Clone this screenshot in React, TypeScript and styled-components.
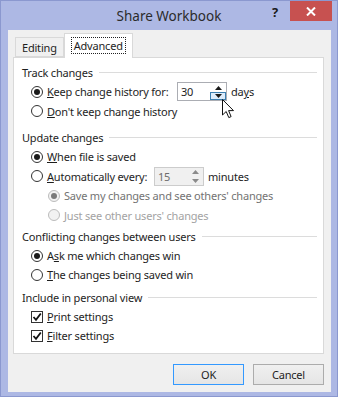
import React from 'react'
import styled, { createGlobalStyle } from 'styled-components'

const GlobalStyle = createGlobalStyle`
  body {
    margin: 0;
    background: #ffffff;
    font-family: 'Noto Sans', 'Open Sans', sans-serif;
  }
`

const Window = styled.div`
  position: relative;
  width: 338px;
  height: 397px;
  box-sizing: border-box;
  background-color: #adb8e4;
  border: 1px solid #8b98cf;
  display: flex;
  flex-direction: column;
  font-size: 11px;
  letter-spacing: -0.2px;
`

const TitleBar = styled.div`
  height: 29px;
  display: grid;
  grid-template-columns: 1fr auto 1fr;
  align-items: start;
`

const Title = styled.div`
  grid-column: 2;
  line-height: 30px;
  font-size: 13.5px;
  letter-spacing: 0;
  color: #2b2b2b;
`

const TitleControls = styled.div`
  grid-column: 3;
  display: flex;
  justify-content: flex-end;
  align-items: center;
  margin-right: 5px;
`

const HelpButton = styled.div`
  width: 26px;
  height: 20px;
  line-height: 22px;
  text-align: center;
  font-size: 13px;
  font-weight: bold;
  color: #1a1a1a;
  margin-right: 2px;
`

const CloseButton = styled.div`
  width: 42px;
  height: 20px;
  background-color: #c75150;
  display: flex;
  align-items: center;
  justify-content: center;
`

const Client = styled.div`
  flex: 1;
  margin: 0 6px 5px 7px;
  background-color: #f0f0f0;
  display: flex;
  flex-direction: column;
  padding: 3px 7px 7px 5px;
`

const TabRow = styled.div`
  display: flex;
  align-items: flex-end;
  padding-left: 2px;
  height: 24px;
  position: relative;
  z-index: 1;
`

const Tab = styled.div<{ active?: boolean }>`
  box-sizing: border-box;
  height: ${({ active }) => (active ? '25px' : '20px')};
  margin-bottom: ${({ active }) => (active ? '-1px' : '0')};
  padding: 0 ${({ active }) => (active ? '7px' : '6px')};
  padding-bottom: ${({ active }) => (active ? '2px' : '0')};
  border: 1px solid #d9d9d9;
  border-bottom: ${({ active }) => (active ? 'none' : '1px solid #d9d9d9')};
  background: ${({ active }) => (active ? '#ffffff' : '#f0f0f0')};
  color: #1e1e1e;
  display: flex;
  align-items: center;
`

const FocusLabel = styled.span`
  outline: 1px dotted #222;
  padding: 0 2px;
  line-height: 15px;
`

const Panel = styled.div`
  height: 297px;
  box-sizing: border-box;
  background: #ffffff;
  border: 1px solid #d9d9d9;
  padding: 4px 6px 0 8px;
`

const Group = styled.div<{ gap?: number }>`
  margin-top: ${({ gap }) => gap ?? 0}px;
`

const GroupHeader = styled.div`
  height: 20px;
  display: flex;
  align-items: center;
  color: #1e1e1e;
  &::after {
    content: '';
    flex: 1;
    height: 1px;
    background: #dcdcdc;
    margin-left: 6px;
  }
`

const Row = styled.div<{ indent?: number; compact?: boolean }>`
  height: ${({ compact }) => (compact ? '18.5px' : '19.5px')};
  display: flex;
  align-items: center;
  padding-left: ${({ indent }) => indent ?? 9}px;
  color: #1e1e1e;
`

const Label = styled.span<{ width?: number; tone?: string }>`
  margin-left: 4px;
  white-space: nowrap;
  width: ${({ width }) => (width ? `${width}px` : 'auto')};
  color: ${({ tone }) => tone ?? '#1e1e1e'};
`

const Radio = styled.span<{ checked?: boolean; disabled?: boolean }>`
  box-sizing: border-box;
  width: 12px;
  height: 12px;
  border-radius: 50%;
  border: 1px solid ${({ disabled }) => (disabled ? '#bcbcbc' : '#333333')};
  background: ${({ disabled }) => (disabled ? '#f2f2f2' : '#ffffff')};
  display: flex;
  align-items: center;
  justify-content: center;
  flex: none;
  &::after {
    content: '';
    width: 6px;
    height: 6px;
    border-radius: 50%;
    background: ${({ disabled }) => (disabled ? '#7a7a7a' : '#1a1a1a')};
    display: ${({ checked }) => (checked ? 'block' : 'none')};
  }
`

const Check = styled.span`
  box-sizing: border-box;
  width: 12px;
  height: 12px;
  border: 1px solid #333333;
  background: #ffffff;
  display: flex;
  align-items: center;
  justify-content: center;
  flex: none;
`

const Spinner = styled.div<{ disabled?: boolean }>`
  box-sizing: border-box;
  width: 50px;
  height: 19px;
  border: 1px solid ${({ disabled }) => (disabled ? '#cccccc' : '#abadb3')};
  background: ${({ disabled }) => (disabled ? '#f0f0f0' : '#ffffff')};
  display: flex;
  color: ${({ disabled }) => (disabled ? '#6d6d6d' : '#1e1e1e')};
`

const SpinValue = styled.div`
  flex: 1;
  padding-left: 3px;
  line-height: 17px;
`

const SpinButtons = styled.div`
  width: 16px;
  display: flex;
  flex-direction: column;
`

const SpinHalf = styled.div<{ hover?: boolean }>`
  flex: 1;
  box-sizing: border-box;
  display: flex;
  align-items: center;
  justify-content: center;
  border: 1px solid ${({ hover }) => (hover ? '#3c7fb1' : 'transparent')};
  background: ${({ hover }) => (hover ? '#dcecfc' : 'transparent')};
`

const Unit = styled.span`
  margin-left: 4px;
`

const Footer = styled.div`
  display: flex;
  justify-content: flex-end;
  gap: 9px;
  margin-top: 10px;
`

const Button = styled.div<{ primary?: boolean }>`
  box-sizing: border-box;
  width: 71px;
  height: 21px;
  border: 1px solid ${({ primary }) => (primary ? '#3399ff' : '#acacac')};
  background: linear-gradient(#f0f0f0, #e5e5e5);
  display: flex;
  align-items: center;
  justify-content: center;
  color: #1e1e1e;
`

const Cursor = styled.svg`
  position: absolute;
  left: 221px;
  top: 98px;
`

const Arrow: React.FC<{ up?: boolean; color?: string }> = ({ up, color = '#1a1a1a' }) => (
  <svg width="7" height="4" viewBox="0 0 7 4">
    <path d={up ? 'M0 4 L3.5 0 L7 4 Z' : 'M0 0 L3.5 4 L7 0 Z'} fill={color} />
  </svg>
)

const Tick = () => (
  <svg width="10" height="10" viewBox="0 0 10 10">
    <path d="M1.5 5 L4 7.8 L8.8 1.5" fill="none" stroke="#111" strokeWidth="1.8" />
  </svg>
)

export default function App() {
  return (
    <>
      <GlobalStyle />
      <Window>
        <TitleBar>
          <Title>Share Workbook</Title>
          <TitleControls>
            <HelpButton>?</HelpButton>
            <CloseButton>
              <svg width="10" height="9" viewBox="0 0 10 9">
                <path d="M1 0.5 L9 8.5 M9 0.5 L1 8.5" stroke="#ffffff" strokeWidth="2" />
              </svg>
            </CloseButton>
          </TitleControls>
        </TitleBar>
        <Client>
          <TabRow>
            <Tab>Editing</Tab>
            <Tab active>
              <FocusLabel>Advanced</FocusLabel>
            </Tab>
          </TabRow>
          <Panel>
            <Group>
              <GroupHeader>Track changes</GroupHeader>
              <Row>
                <Radio checked />
                <Label width={130}>
                  <u>K</u>eep change history for:
                </Label>
                <Spinner>
                  <SpinValue>30</SpinValue>
                  <SpinButtons>
                    <SpinHalf>
                      <Arrow up />
                    </SpinHalf>
                    <SpinHalf hover>
                      <Arrow />
                    </SpinHalf>
                  </SpinButtons>
                </Spinner>
                <Unit>
                  da<u>y</u>s
                </Unit>
              </Row>
              <Row>
                <Radio />
                <Label>
                  <u>D</u>on't keep change history
                </Label>
              </Row>
            </Group>
            <Group gap={6}>
              <GroupHeader>Update changes</GroupHeader>
              <Row>
                <Radio checked />
                <Label>
                  <u>W</u>hen file is saved
                </Label>
              </Row>
              <Row>
                <Radio />
                <Label width={107}>
                  <u>A</u>utomatically every:
                </Label>
                <Spinner disabled>
                  <SpinValue>15</SpinValue>
                  <SpinButtons>
                    <SpinHalf>
                      <Arrow up color="#8a8a8a" />
                    </SpinHalf>
                    <SpinHalf>
                      <Arrow color="#8a8a8a" />
                    </SpinHalf>
                  </SpinButtons>
                </Spinner>
                <Unit>minutes</Unit>
              </Row>
              <Row indent={26}>
                <Radio checked disabled />
                <Label tone="#737373">Save my changes and see others' changes</Label>
              </Row>
              <Row indent={26}>
                <Radio disabled />
                <Label tone="#a3a3a3">Just see other users' changes</Label>
              </Row>
            </Group>
            <Group gap={1}>
              <GroupHeader>Conflicting changes between users</GroupHeader>
              <Row>
                <Radio checked />
                <Label>
                  A<u>s</u>k me which changes win
                </Label>
              </Row>
              <Row compact>
                <Radio />
                <Label>
                  <u>T</u>he changes being saved win
                </Label>
              </Row>
            </Group>
            <Group gap={3}>
              <GroupHeader>Include in personal view</GroupHeader>
              <Row>
                <Check>
                  <Tick />
                </Check>
                <Label>
                  <u>P</u>rint settings
                </Label>
              </Row>
              <Row compact>
                <Check>
                  <Tick />
                </Check>
                <Label>
                  <u>F</u>ilter settings
                </Label>
              </Row>
            </Group>
          </Panel>
          <Footer>
            <Button primary>OK</Button>
            <Button>Cancel</Button>
          </Footer>
        </Client>
        <Cursor width="13" height="20" viewBox="0 0 13 20">
          <path
            d="M0.5 0.5 L0.5 16 L4.2 12.5 L6.8 18.6 L9.1 17.6 L6.6 11.6 L11.5 11.6 Z"
            fill="#ffffff"
            stroke="#111"
            strokeWidth="1"
          />
        </Cursor>
      </Window>
    </>
  )
}
